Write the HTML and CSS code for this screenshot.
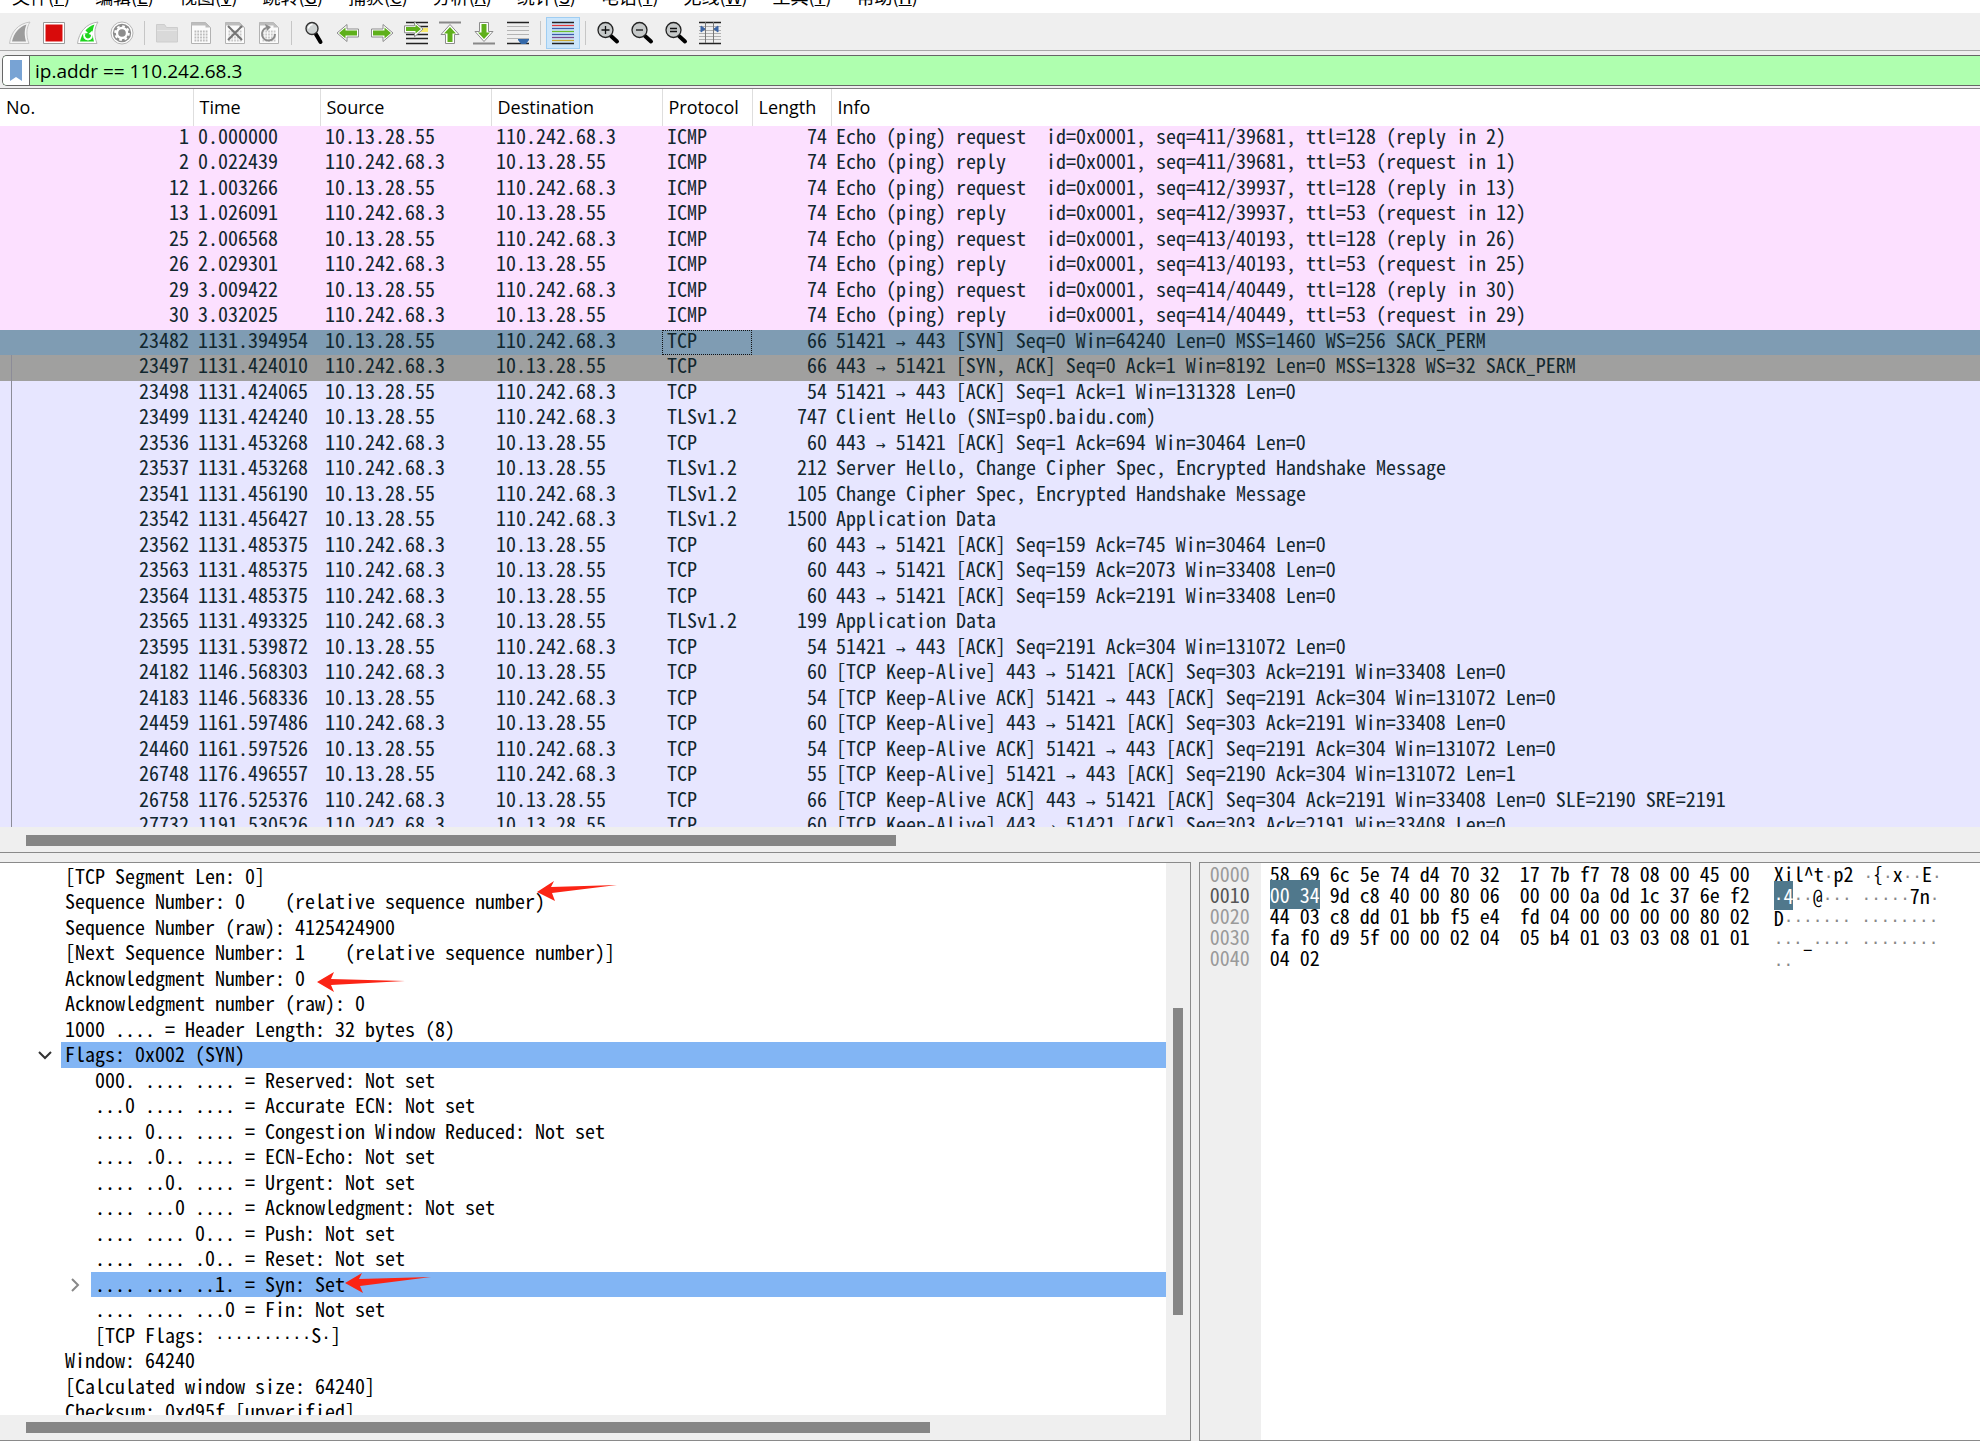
FILE: index.html
```html
<!DOCTYPE html>
<html lang="zh-CN">
<head>
<meta charset="utf-8">
<title>Wireshark</title>
<link rel="stylesheet" href="styles.css">
</head>
<body>
<nav class="menubar">
<button>文件(<u>F</u>)</button><button>编辑(<u>E</u>)</button><button>视图(<u>V</u>)</button><button>跳转(<u>G</u>)</button><button>捕获(<u>C</u>)</button><button>分析(<u>A</u>)</button><button>统计(<u>S</u>)</button><button>电话(<u>Y</u>)</button><button>无线(<u>W</u>)</button><button>工具(<u>T</u>)</button><button>帮助(<u>H</u>)</button>
</nav>
<div class="toolbar">
<button aria-label="Start capture"><svg viewBox="0 0 24 24"><path d="M1.500 22.500C3 11 10 2.500 22 1c-4 6-4 14-1 21.500z" fill="#f4f4f4" stroke="#c4c4c4"/><path d="M4 20.500C6 12 11 6 18.500 3.500c-2.500 6-2 11-.5 17z" fill="#9c9c9c"/></svg></button>
<button aria-label="Stop capture"><svg viewBox="0 0 24 24"><path d="M1.500 1.500h21v21h-21z" fill="#fff" stroke="#999"/><path d="M3.500 3.500h17v17h-17z" fill="#d80b0b"/></svg></button>
<button aria-label="Restart capture"><svg viewBox="0 0 24 24"><path d="M1.500 22.500C3 11 10 2.500 22 1c-4 6-4 14-1 21.500z" fill="#fff" stroke="#b4b4b4"/><path d="M4 20.500C6 12 11 6 18.500 3.500c-2.500 6-2 11-.5 17z" fill="#1fd51f"/><path d="M8.500 12.500a4 4 0 1 0 7 0" fill="none" stroke="#fff" stroke-width="2"/><path d="M6 13l2-5 4 4zM12.500 13l4-3.500 1 5z" fill="#fff"/></svg></button>
<button aria-label="Capture options"><svg viewBox="0 0 24 24"><circle cx="12" cy="12" r="11" fill="#fff" stroke="#b5b5b5"/><circle cx="12" cy="12" r="9.200" fill="#8d8d8d"/><circle cx="12" cy="12" r="5" fill="none" stroke="#fff" stroke-width="2.400"/><circle cx="12" cy="12" r="6.800" fill="none" stroke="#fff" stroke-width="2" stroke-dasharray="2.700 2.640"/></svg></button>
<span class="sep"></span>
<button aria-label="Open"><svg viewBox="0 0 24 24"><path d="M1.500 21V3.500h8l2 3h11V21z" fill="#d9d9d9" stroke="#cdcdcd"/><path d="M2 9.500h20" stroke="#e6e6e6"/></svg></button>
<button aria-label="Save"><svg viewBox="0 0 24 24"><path d="M2.500 1.500h14l5 5v16h-19z" fill="#fbfbfb" stroke="#b2b2b2"/><path d="M2.500 1.500h14v3h-14zM16.500 1.500v5h5z" fill="#bdbdbd"/><path d="M5.500 10.500h13M5.500 13.500h13M5.500 16.500h13M5.500 19.500h13" stroke="#bcbcbc" stroke-width="1.800" stroke-dasharray="1.800 1"/></svg></button>
<button aria-label="Close file"><svg viewBox="0 0 24 24"><path d="M2.500 1.500h14l5 5v16h-19z" fill="#fbfbfb" stroke="#b2b2b2"/><path d="M2.500 1.500h14v3h-14zM16.500 1.500v5h5z" fill="#bdbdbd"/><path d="M5.500 10.500h13M5.500 13.500h13M5.500 16.500h13M5.500 19.500h13" stroke="#c8c8c8" stroke-width="1.800" stroke-dasharray="1.800 1"/><path d="M5 5l14 14M19 5L5 19" stroke="#747474" stroke-width="2"/></svg></button>
<button aria-label="Reload"><svg viewBox="0 0 24 24"><path d="M2.500 1.500h14l5 5v16h-19z" fill="#fbfbfb" stroke="#b2b2b2"/><path d="M2.500 1.500h14v3h-14zM16.500 1.500v5h5z" fill="#bdbdbd"/><path d="M5.500 10.500h13M5.500 13.500h13M5.500 16.500h13M5.500 19.500h13" stroke="#c8c8c8" stroke-width="1.800" stroke-dasharray="1.800 1"/><path d="M9 7a6.500 6.500 0 1 0 9 6" fill="none" stroke="#8a8a8a" stroke-width="2"/><path d="M8 3l6 3-4 4z" fill="#8a8a8a"/></svg></button>
<span class="sep"></span>
<button aria-label="Find"><svg viewBox="0 0 24 24"><path d="M13.500 12.500l5 8.500" stroke="#000" stroke-width="4" stroke-linecap="round"/><circle cx="10" cy="7.500" r="6" fill="#cfd3d3" stroke="#333" stroke-width="1.400"/><path d="M6.500 7.500a4 4 0 0 1 4-4" fill="none" stroke="#fff" stroke-width="1.500"/></svg></button>
<button aria-label="Previous"><svg viewBox="0 0 24 24"><path d="M1 12L11 3.500v4.500h11.500v8H11v4.500z" fill="#fff" stroke="#8c8c8c"/><path d="M3 12l6.500-5.500v3h11.500v5H9.500v3z" fill="#5fb01b"/></svg></button>
<button aria-label="Next"><svg viewBox="0 0 24 24"><path d="M23 12L13 3.500v4.500H1.500v8H13v4.500z" fill="#fff" stroke="#8c8c8c"/><path d="M21 12l-6.500-5.500v3H3v5h11.500v3z" fill="#5fb01b"/></svg></button>
<button aria-label="Go to packet"><svg viewBox="0 0 24 24"><path d="M2 1.500h22M2 5.500h22M2 13.500h22M2 17.500h22M2 22.500h22" stroke="#222" stroke-width="1.300"/><path d="M15 7h9v4h-9z" fill="#f7e96c"/><path d="M19 8L10.500.8v4H.5v7h10v4z" fill="#fff" stroke="#8c8c8c"/><path d="M17 8l-5.500-4.500v2.500H2v4h9.500v2.500z" fill="#5fb01b"/></svg></button>
<button aria-label="First packet"><svg viewBox="0 0 24 24"><path d="M1 1.500h22" stroke="#888" stroke-width="2"/><path d="M12 3.500l9 10h-4.500v9h-9v-9H3z" fill="#fff" stroke="#8c8c8c"/><path d="M12 6l6 6.500h-3.500v8.500h-5v-8.500H6z" fill="#5fb01b"/></svg></button>
<button aria-label="Last packet"><svg viewBox="0 0 24 24"><path d="M1 22.500h22" stroke="#888" stroke-width="2"/><path d="M12 20.500l9-10h-4.500v-9h-9v9H3z" fill="#fff" stroke="#8c8c8c"/><path d="M12 18l6-6.500h-3.500V3h-5v8.500H6z" fill="#5fb01b"/></svg></button>
<button aria-label="Auto scroll"><svg viewBox="0 0 24 24"><path d="M1 1.500h22M1 22.500h22" stroke="#222" stroke-width="1.500"/><path d="M1 5.500h22M1 9.500h22M1 13.500h22M1 17.500h22" stroke="#b4b4b4"/><path d="M12 18h11v1l-3 4h-5l-3-4z" fill="#3468a8"/></svg></button>
<span class="sep"></span>
<button class="on" aria-label="Colorize"><svg viewBox="0 0 24 24"><path d="M1 1.500h22M1 22.500h22" stroke="#222" stroke-width="1.500"/><path d="M1 4.500h22" stroke="#e2383a" stroke-width="1.300"/><path d="M1 7.500h22" stroke="#3c5ca8" stroke-width="1.300"/><path d="M1 10.500h22" stroke="#6dbc2e" stroke-width="1.300"/><path d="M1 13.500h22" stroke="#3c5ca8" stroke-width="1.300"/><path d="M1 16.500h22" stroke="#7a4b8b" stroke-width="1.300"/><path d="M1 19.500h22" stroke="#c8a72e" stroke-width="1.300"/></svg></button>
<span class="sep"></span>
<button aria-label="Zoom in"><svg viewBox="0 0 24 24"><path d="M15 15l6 5.500" stroke="#000" stroke-width="4" stroke-linecap="round"/><circle cx="9.500" cy="9" r="7.500" fill="#c6c9c9" stroke="#222" stroke-width="1.300"/><path d="M5.500 9h8M9.500 5v8" stroke="#111" stroke-width="1.300"/></svg></button>
<button aria-label="Zoom out"><svg viewBox="0 0 24 24"><path d="M15 15l6 5.500" stroke="#000" stroke-width="4" stroke-linecap="round"/><circle cx="9.500" cy="9" r="7.500" fill="#c6c9c9" stroke="#222" stroke-width="1.300"/><path d="M6 9h7" stroke="#111" stroke-width="1.300"/></svg></button>
<button aria-label="Normal size"><svg viewBox="0 0 24 24"><path d="M15 15l6 5.500" stroke="#000" stroke-width="4" stroke-linecap="round"/><circle cx="9.500" cy="9" r="7.500" fill="#c6c9c9" stroke="#222" stroke-width="1.300"/><path d="M6 7.500h7M6 10.500h7" stroke="#111" stroke-width="1.300"/></svg></button>
<button aria-label="Resize columns"><svg viewBox="0 0 24 24"><path d="M1 1.500h22M1 22.500h22" stroke="#222" stroke-width="1.500"/><path d="M1 5.500h22M1 9.500h22M1 12.500h22M1 15.500h22M1 18.500h22" stroke="#b0b0b0"/><path d="M7.500 1v21M15.500 1v21" stroke="#777"/><path d="M3 5l4 3-4 3zM20 5l-4 3 4 3z" fill="#3b64a5" stroke="#3b64a5"/></svg></button>
</div>
<div class="filter">
<div class="field">
<button class="mark" aria-label="Bookmarks"><svg viewBox="0 0 14 22"><path d="M1 0h12v21l-6-4-6 4z" fill="#78a3d4"/></svg></button>
<input type="text" aria-label="Display filter" value="ip.addr == 110.242.68.3">
</div>
</div>
<main>
<section class="list">
<div class="viewport">
<table>
<colgroup><col class="c-no"><col class="c-time"><col class="c-addr"><col class="c-dest"><col class="c-proto"><col class="c-len"><col></colgroup>
<thead><tr><th>No.</th><th>Time</th><th>Source</th><th>Destination</th><th>Protocol</th><th>Length</th><th>Info</th></tr></thead>
<tbody>
<tr class="icmp"><td>1</td><td>0.000000</td><td>10.13.28.55</td><td>110.242.68.3</td><td>ICMP</td><td>74</td><td>Echo (ping) request  id=0x0001, seq=411/39681, ttl=128 (reply in 2)</td></tr>
<tr class="icmp"><td>2</td><td>0.022439</td><td>110.242.68.3</td><td>10.13.28.55</td><td>ICMP</td><td>74</td><td>Echo (ping) reply    id=0x0001, seq=411/39681, ttl=53 (request in 1)</td></tr>
<tr class="icmp"><td>12</td><td>1.003266</td><td>10.13.28.55</td><td>110.242.68.3</td><td>ICMP</td><td>74</td><td>Echo (ping) request  id=0x0001, seq=412/39937, ttl=128 (reply in 13)</td></tr>
<tr class="icmp"><td>13</td><td>1.026091</td><td>110.242.68.3</td><td>10.13.28.55</td><td>ICMP</td><td>74</td><td>Echo (ping) reply    id=0x0001, seq=412/39937, ttl=53 (request in 12)</td></tr>
<tr class="icmp"><td>25</td><td>2.006568</td><td>10.13.28.55</td><td>110.242.68.3</td><td>ICMP</td><td>74</td><td>Echo (ping) request  id=0x0001, seq=413/40193, ttl=128 (reply in 26)</td></tr>
<tr class="icmp"><td>26</td><td>2.029301</td><td>110.242.68.3</td><td>10.13.28.55</td><td>ICMP</td><td>74</td><td>Echo (ping) reply    id=0x0001, seq=413/40193, ttl=53 (request in 25)</td></tr>
<tr class="icmp"><td>29</td><td>3.009422</td><td>10.13.28.55</td><td>110.242.68.3</td><td>ICMP</td><td>74</td><td>Echo (ping) request  id=0x0001, seq=414/40449, ttl=128 (reply in 30)</td></tr>
<tr class="icmp"><td>30</td><td>3.032025</td><td>110.242.68.3</td><td>10.13.28.55</td><td>ICMP</td><td>74</td><td>Echo (ping) reply    id=0x0001, seq=414/40449, ttl=53 (request in 29)</td></tr>
<tr class="selected"><td>23482</td><td>1131.394954</td><td>10.13.28.55</td><td>110.242.68.3</td><td class="focus">TCP</td><td>66</td><td>51421 <i>→</i> 443 [SYN] Seq=0 Win=64240 Len=0 MSS=1460 WS=256 SACK_PERM</td></tr>
<tr class="synack conv"><td>23497</td><td>1131.424010</td><td>110.242.68.3</td><td>10.13.28.55</td><td>TCP</td><td>66</td><td>443 <i>→</i> 51421 [SYN, ACK] Seq=0 Ack=1 Win=8192 Len=0 MSS=1328 WS=32 SACK_PERM</td></tr>
<tr class="conv"><td>23498</td><td>1131.424065</td><td>10.13.28.55</td><td>110.242.68.3</td><td>TCP</td><td>54</td><td>51421 <i>→</i> 443 [ACK] Seq=1 Ack=1 Win=131328 Len=0</td></tr>
<tr class="conv"><td>23499</td><td>1131.424240</td><td>10.13.28.55</td><td>110.242.68.3</td><td>TLSv1.2</td><td>747</td><td>Client Hello (SNI=sp0.baidu.com)</td></tr>
<tr class="conv"><td>23536</td><td>1131.453268</td><td>110.242.68.3</td><td>10.13.28.55</td><td>TCP</td><td>60</td><td>443 <i>→</i> 51421 [ACK] Seq=1 Ack=694 Win=30464 Len=0</td></tr>
<tr class="conv"><td>23537</td><td>1131.453268</td><td>110.242.68.3</td><td>10.13.28.55</td><td>TLSv1.2</td><td>212</td><td>Server Hello, Change Cipher Spec, Encrypted Handshake Message</td></tr>
<tr class="conv"><td>23541</td><td>1131.456190</td><td>10.13.28.55</td><td>110.242.68.3</td><td>TLSv1.2</td><td>105</td><td>Change Cipher Spec, Encrypted Handshake Message</td></tr>
<tr class="conv"><td>23542</td><td>1131.456427</td><td>10.13.28.55</td><td>110.242.68.3</td><td>TLSv1.2</td><td>1500</td><td>Application Data</td></tr>
<tr class="conv"><td>23562</td><td>1131.485375</td><td>110.242.68.3</td><td>10.13.28.55</td><td>TCP</td><td>60</td><td>443 <i>→</i> 51421 [ACK] Seq=159 Ack=745 Win=30464 Len=0</td></tr>
<tr class="conv"><td>23563</td><td>1131.485375</td><td>110.242.68.3</td><td>10.13.28.55</td><td>TCP</td><td>60</td><td>443 <i>→</i> 51421 [ACK] Seq=159 Ack=2073 Win=33408 Len=0</td></tr>
<tr class="conv"><td>23564</td><td>1131.485375</td><td>110.242.68.3</td><td>10.13.28.55</td><td>TCP</td><td>60</td><td>443 <i>→</i> 51421 [ACK] Seq=159 Ack=2191 Win=33408 Len=0</td></tr>
<tr class="conv"><td>23565</td><td>1131.493325</td><td>110.242.68.3</td><td>10.13.28.55</td><td>TLSv1.2</td><td>199</td><td>Application Data</td></tr>
<tr class="conv"><td>23595</td><td>1131.539872</td><td>10.13.28.55</td><td>110.242.68.3</td><td>TCP</td><td>54</td><td>51421 <i>→</i> 443 [ACK] Seq=2191 Ack=304 Win=131072 Len=0</td></tr>
<tr class="conv"><td>24182</td><td>1146.568303</td><td>110.242.68.3</td><td>10.13.28.55</td><td>TCP</td><td>60</td><td>[TCP Keep-Alive] 443 <i>→</i> 51421 [ACK] Seq=303 Ack=2191 Win=33408 Len=0</td></tr>
<tr class="conv"><td>24183</td><td>1146.568336</td><td>10.13.28.55</td><td>110.242.68.3</td><td>TCP</td><td>54</td><td>[TCP Keep-Alive ACK] 51421 <i>→</i> 443 [ACK] Seq=2191 Ack=304 Win=131072 Len=0</td></tr>
<tr class="conv"><td>24459</td><td>1161.597486</td><td>110.242.68.3</td><td>10.13.28.55</td><td>TCP</td><td>60</td><td>[TCP Keep-Alive] 443 <i>→</i> 51421 [ACK] Seq=303 Ack=2191 Win=33408 Len=0</td></tr>
<tr class="conv"><td>24460</td><td>1161.597526</td><td>10.13.28.55</td><td>110.242.68.3</td><td>TCP</td><td>54</td><td>[TCP Keep-Alive ACK] 51421 <i>→</i> 443 [ACK] Seq=2191 Ack=304 Win=131072 Len=0</td></tr>
<tr class="conv"><td>26748</td><td>1176.496557</td><td>10.13.28.55</td><td>110.242.68.3</td><td>TCP</td><td>55</td><td>[TCP Keep-Alive] 51421 <i>→</i> 443 [ACK] Seq=2190 Ack=304 Win=131072 Len=1</td></tr>
<tr class="conv"><td>26758</td><td>1176.525376</td><td>110.242.68.3</td><td>10.13.28.55</td><td>TCP</td><td>66</td><td>[TCP Keep-Alive ACK] 443 <i>→</i> 51421 [ACK] Seq=304 Ack=2191 Win=33408 Len=0 SLE=2190 SRE=2191</td></tr>
<tr class="conv"><td>27732</td><td>1191.530526</td><td>110.242.68.3</td><td>10.13.28.55</td><td>TCP</td><td>60</td><td>[TCP Keep-Alive] 443 <i>→</i> 51421 [ACK] Seq=303 Ack=2191 Win=33408 Len=0</td></tr>
</tbody>
</table>
</div>
<div class="hbar"><span class="thumb list-thumb"></span></div>
</section>
<div class="lower">
<section class="details">
<div class="tree-wrap">
<ul class="tree">
<li>[TCP Segment Len: 0]</li>
<li>Sequence Number: 0    (relative sequence number)<svg class="arrow up" viewBox="0 0 88 20"><path d="M0 11L17 0l-3 6 66-2-65 8 3 8z"/></svg></li>
<li>Sequence Number (raw): 4125424900</li>
<li>[Next Sequence Number: 1    (relative sequence number)]</li>
<li>Acknowledgment Number: 0<svg class="arrow gap" viewBox="0 0 88 20"><path d="M0 10L17 0l-3 7 74 2-74 4 3 7z"/></svg></li>
<li>Acknowledgment number (raw): 0</li>
<li>1000 .... = Header Length: 32 bytes (8)</li>
<li class="hit"><svg class="chev" viewBox="0 0 14 14"><path d="M1 4l6 6 6-6"/></svg>Flags: 0x002 (SYN)</li>
<li class="sub">000. .... .... = Reserved: Not set</li>
<li class="sub">...0 .... .... = Accurate ECN: Not set</li>
<li class="sub">.... 0... .... = Congestion Window Reduced: Not set</li>
<li class="sub">.... .0.. .... = ECN-Echo: Not set</li>
<li class="sub">.... ..0. .... = Urgent: Not set</li>
<li class="sub">.... ...0 .... = Acknowledgment: Not set</li>
<li class="sub">.... .... 0... = Push: Not set</li>
<li class="sub">.... .... .0.. = Reset: Not set</li>
<li class="sub hit"><svg class="chev closed" viewBox="0 0 14 14"><path d="M4 1l6 6-6 6"/></svg>.... .... ..1. = Syn: Set<svg class="arrow" viewBox="0 0 88 20"><path d="M0 10L17 0l-3 6 72-2-71 9 3 7z"/></svg></li>
<li class="sub">.... .... ...0 = Fin: Not set</li>
<li class="sub">[TCP Flags: <b>··········</b>S<b>·</b>]</li>
<li>Window: 64240</li>
<li>[Calculated window size: 64240]</li>
<li>Checksum: 0xd95f [unverified]</li>
</ul>
<div class="vbar"><span class="vthumb"></span></div>
</div>
<div class="hbar"><span class="thumb details-thumb"></span></div>
</section>
<section class="bytes">
<pre class="offsets">0000
<em>0010</em>
0020
0030
0040</pre>
<pre class="hex">58 69 6c 5e 74 d4 70 32  17 7b f7 78 08 00 45 00
<mark>00 34</mark> 9d c8 40 00 80 06  00 00 0a 0d 1c 37 6e f2
44 03 c8 dd 01 bb f5 e4  fd 04 00 00 00 00 80 02
fa f0 d9 5f 00 00 02 04  05 b4 01 03 03 08 01 01
04 02</pre>
<pre class="ascii">Xil^t<b>·</b>p2 <b>·</b>{<b>·</b>x<b>··</b>E<b>·</b>
<mark><b>·</b>4</mark><b>··</b>@<b>···</b> <b>·····</b>7n<b>·</b>
D<b>·······</b> <b>········</b>
<b>···</b>_<b>····</b> <b>········</b>
<b>··</b></pre>
</section>
</div>
</main>
</body>
</html>
```

FILE: styles.css
```css
* { box-sizing: border-box; }
html, body { height: 100%; margin: 0; }
body {
  display: flex;
  flex-direction: column;
  overflow: hidden;
  background: #efefef;
  color: #000;
  font: 18px/24px "Open Sans", "Noto Sans CJK SC", sans-serif;
}
button { border: 0; margin: 0; padding: 0; background: none; font: inherit; color: inherit; }

.menubar {
  display: flex;
  align-items: flex-end;
  height: 13px;
  background: #fff;
  flex: none;
}
.menubar button {
  font: 18px/24px "Noto Sans CJK SC", sans-serif;
  padding: 0 13px 5px 12px;
  white-space: nowrap;
  flex: none;
}

.toolbar {
  display: flex;
  align-items: center;
  flex: none;
  height: 38px;
  padding: 2px 3px 0;
  border-bottom: 1px solid #a8a8a8;
}
.toolbar button { display: grid; place-items: center; width: 34px; height: 32px; flex: none; }
.toolbar svg { width: 24px; height: 24px; display: block; }
.toolbar .on { background: #cce6fb; border: 1px solid #9fcdf2; }
.sep { width: 1px; height: 24px; margin: 0 5px; background: #c6c6c6; flex: none; }

.filter { flex: none; padding: 4px 0 2px; border-bottom: 1px solid #808080; }
.field {
  display: flex;
  height: 31px;
  margin-left: 2px;
  border: 1px solid #666;
  border-right: 0;
  border-radius: 5px 0 0 5px;
  background: #afffaf;
  overflow: hidden;
}
.mark { display: grid; place-items: center; width: 27px; background: #fff; border-right: 1px solid #666; }
.mark svg { width: 14px; height: 22px; }
.field input {
  flex: 1;
  min-width: 0;
  border: 0;
  padding: 0 5px;
  background: none;
  font: 19px/24px "Open Sans", sans-serif;
  color: #000;
  outline: 0;
}

main { display: flex; flex-direction: column; gap: 9px; flex: 1; min-height: 0; }
.list {
  flex: 764 1 0;
  min-height: 0;
  display: flex;
  flex-direction: column;
  border-bottom: 1px solid #8a8a8a;
}
.viewport { flex: 1; min-height: 0; overflow: hidden; background: #fff; }

table, .tree, pre { font-family: "Noto Sans Mono CJK SC", "DejaVu Sans Mono", monospace; font-size: 20px; line-height: 24px; }
table { width: 100%; border-collapse: collapse; table-layout: fixed; }
.c-no { width: 193px; }
.c-time { width: 127px; }
.c-addr { width: 171px; }
.c-dest { width: 171px; }
.c-proto { width: 90px; }
.c-len { width: 79px; }
th {
  height: 37px;
  padding: 0 6px 2px;
  border-right: 1px solid #dedede;
  font: 18px/24px "Open Sans", sans-serif;
  text-align: left;
}
th:last-child { border-right: 0; }
tbody tr { height: 26px; background: #e7e6ff; color: #12272e; }
tbody tr:nth-child(odd) { height: 25px; }
td { padding: 0 4px; line-height: 20px; vertical-align: top; white-space: pre; }
td:nth-child(1), td:nth-child(6) { text-align: right; }
td:nth-child(2), td:nth-child(3), td:nth-child(4), td:nth-child(5), td:nth-child(7) { padding-left: 5px; }
i, b { font: 16px/16px "DejaVu Sans Mono", monospace; }
tbody .icmp { background: #fce0ff; }
tbody .selected { background: #7f9cb3; }
tbody .synack { background: #a0a09f; }
.focus { outline: 1px dotted #111; outline-offset: -1px; }
.conv td:first-child {
  background: linear-gradient(#8c8c98, #8c8c98) 11px 0 / 1px 100% no-repeat;
}

.hbar { flex: none; height: 25px; padding: 7px 20px 7px 26px; background: #efefef; }
.list .hbar { padding-top: 8px; }
.thumb { display: block; height: 11px; background: #868686; }
.list-thumb { width: 45%; }
.details-thumb { width: 79%; }

.lower { flex: 579 1 0; min-height: 0; display: flex; gap: 8px; }
.details {
  flex: 1191 1 0;
  min-width: 0;
  display: flex;
  flex-direction: column;
  border: 1px solid #8a8a8a;
  border-left: 0;
}
.tree-wrap { flex: 1; min-height: 0; display: flex; overflow: hidden; background: #fff; }
.tree { flex: 1; min-width: 0; margin: 0; padding: 1px 0 0 61px; list-style: none; }
.tree li { position: relative; height: 26px; padding-left: 4px; white-space: pre; }
.tree li:nth-child(odd) { height: 25px; }
.tree .sub { margin-left: 30px; }
.tree .hit { background: #82b5f4; }
.chev {
  position: absolute;
  left: -23px;
  top: 6px;
  width: 14px;
  height: 14px;
  fill: none;
  stroke: #333;
  stroke-width: 2;
}
.closed { stroke: #888; }
.arrow { position: absolute; top: 1px; width: 88px; height: 20px; fill: #fb2415; }
.gap { top: 6px; margin-left: 12px; }
.up { top: -8px; margin-left: -8px; }
.vbar { flex: none; width: 24px; padding: 145px 7px 0; background: #efefef; }
.vthumb { display: block; height: 307px; background: #868686; }

.bytes {
  flex: 781 1 0;
  min-width: 0;
  display: flex;
  border: 1px solid #8a8a8a;
  border-right: 0;
  background: #fff;
  overflow: hidden;
}
pre { margin: 0; line-height: 21px; }
.offsets { width: 61px; padding-left: 10px; background: #efefef; color: #9a9a9a; }
.offsets em { font-style: normal; color: #555; }
.hex { padding-left: 9px; }
.ascii { padding-left: 24px; }
.ascii b { color: #888; }
mark { background: #50788c; color: #fff; }
.ascii mark b { color: #fff; }
```
